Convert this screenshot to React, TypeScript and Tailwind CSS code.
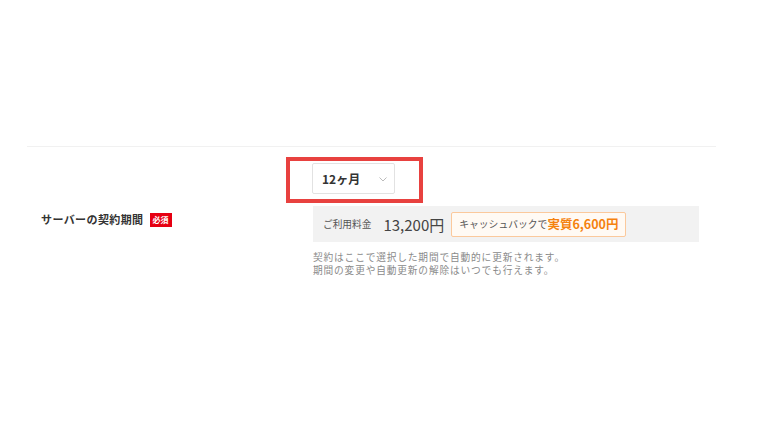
// 契約期間の選択フォーム（注釈の赤枠つき）
const jp = "font-['Noto_Sans_CJK_JP','Noto_Sans',sans-serif]";

export default function App() {
  return (
    <div className={`h-[428px] w-[760px] overflow-hidden bg-white pt-[146px] text-[#333] ${jp}`}>
      <div className="ml-[27px] w-[689px] border-t border-[#f1f1f1]" />

      {/* 期間セレクト */}
      <div className="mt-[10px] flex pl-[286px]">
        <div className="border-4 border-[#e8413f] pb-[5px] pl-[22px] pr-[24px] pt-[2px]">
          <div className="flex h-[31px] w-[83px] items-center justify-between rounded-[2px] border border-[#e2e2e2] bg-white pl-[9px] pr-[7px]">
            <span className="text-[12px] font-bold leading-none text-[#333]">12ヶ月</span>
            <svg width="8" height="5" viewBox="0 0 8 5" className="mt-[2px]">
              <path d="M0.5 0.5 L4 4 L7.5 0.5" fill="none" stroke="#bbb" strokeWidth="1" />
            </svg>
          </div>
        </div>
      </div>

      <div className="mt-[3px] flex">
        <div className="flex w-[313px] items-start gap-[6px] pl-[41px] pt-[6px]">
          <span className="text-[11px] font-bold leading-[14px] tracking-[0.4px] text-[#333]">サーバーの契約期間</span>
          <span className="mt-[1px] flex h-[14px] items-center bg-[#e60012] px-[3px] text-[8px] font-bold leading-none text-white">
            必須
          </span>
        </div>

        <div className="w-[386px]">
          <div className="flex h-[36px] items-center bg-[#f2f2f2] pl-[10px]">
            <span className="text-[9.7px] text-[#555]">ご利用料金</span>
            <span className="ml-[12px] text-[15px] leading-none text-[#444]">13,200円</span>
            <div className="ml-[7px] flex h-[25px] w-[175px] items-center rounded-[2px] border border-[#fbc99c] bg-[#fffaf4] pl-[7px]">
              <span className="text-[9.8px] text-[#555]">キャッシュバックで</span>
              <span className="text-[12.5px] font-bold text-[#f5820f]">実質6,600円</span>
            </div>
          </div>
          <div className="mt-[9px] flex flex-col text-[9.7px] leading-[12.5px] tracking-[0.85px] text-[#8a8a8a]">
            <span>契約はここで選択した期間で自動的に更新されます。</span>
            <span>期間の変更や自動更新の解除はいつでも行えます。</span>
          </div>
        </div>
      </div>
    </div>
  );
}
